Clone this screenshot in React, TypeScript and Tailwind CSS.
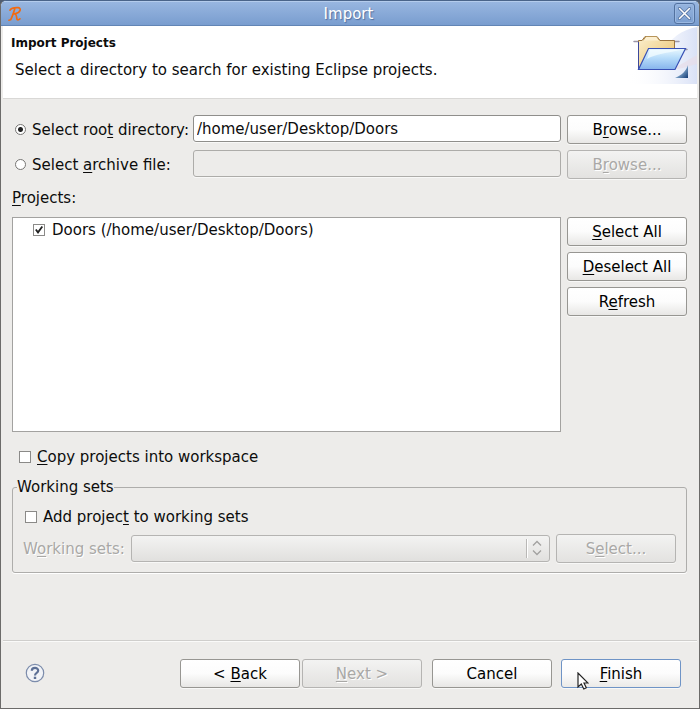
import { useState } from "react";
import type { ReactNode } from "react";

type ButtonProps = {
  children: ReactNode;
  disabled?: boolean;
  focused?: boolean;
};

function Key({ children }: { children: ReactNode }) {
  return <span className="underline decoration-1 underline-offset-2">{children}</span>;
}

function Button({ children, disabled = false, focused = false }: ButtonProps) {
  const tone = disabled
    ? "border-[#b5b4b2] bg-linear-to-b from-[#f3f3f2] to-[#e3e2e0] text-[#a9a8a6] [text-shadow:1px_1px_0_#fff]"
    : focused
      ? "border-[#6f94c6] bg-linear-to-b from-white via-[#fcfcfc] to-[#ebeae8] text-black"
      : "border-[#979692] bg-linear-to-b from-white via-[#fcfcfc] to-[#e8e7e5] text-black";
  return (
    <button
      type="button"
      disabled={disabled}
      className={`h-[29px] w-[120px] shrink-0 rounded-[3px] border leading-5 shadow-[0_1px_0_#f8f8f7] ${tone}`}
    >
      {children}
    </button>
  );
}

function Radio({ checked, onChange, id }: { checked: boolean; onChange: () => void; id: string }) {
  return (
    <input
      id={id}
      type="radio"
      name="source"
      checked={checked}
      onChange={onChange}
      className="size-[11px] shrink-0 appearance-none rounded-full border border-[#777674] bg-white checked:bg-[radial-gradient(circle,#222_0,#222_2px,#fff_3px)]"
    />
  );
}

function Check({ id, defaultChecked = false }: { id: string; defaultChecked?: boolean }) {
  const [checked, setChecked] = useState(defaultChecked);
  return (
    <span className="grid size-[12px] shrink-0">
      <input
        id={id}
        type="checkbox"
        checked={checked}
        onChange={() => setChecked(!checked)}
        className="col-start-1 row-start-1 size-[12px] appearance-none border border-[#8b8a88] bg-white"
      />
      {checked && (
        <svg viewBox="0 0 12 12" className="pointer-events-none col-start-1 row-start-1 size-[12px]" fill="none">
          <path d="M2.800 5.500 5 8.400 9.300 2.500" stroke="#222" strokeWidth="1.800" />
        </svg>
      )}
    </span>
  );
}

function Logo() {
  return (
    <svg viewBox="0 0 16 16" className="size-4" fill="none" stroke="#f26a10" strokeWidth="1.700" strokeLinecap="round" strokeLinejoin="round">
      <path d="M3 4.200C4 2.200 8 1.600 11 1.700 14.500 1.900 14 6.500 8.500 7.600L6.500 8M7.700 3C6.500 7 5.200 11 3.600 13.800L2 14.200M8 8C10 8.500 9.300 11.500 10 13.200 10.600 14.200 12.200 13.800 13 12.800" />
    </svg>
  );
}

function FolderBanner() {
  return (
    <svg viewBox="0 0 75 58" className="h-[58px] w-[75px]" fill="none">
      <defs>
        <linearGradient id="glow" x1="0" y1="0" x2="1" y2="0">
          <stop offset="0" stopColor="#fff" stopOpacity="0" />
          <stop offset="1" stopColor="#d9e1f6" />
        </linearGradient>
        <linearGradient id="paper" x1="0" y1="0" x2="1" y2="1">
          <stop offset="0" stopColor="#fbefcd" />
          <stop offset="1" stopColor="#e9bf68" />
        </linearGradient>
        <linearGradient id="front" x1="0" y1="0" x2="0" y2="1">
          <stop offset="0" stopColor="#e9f8ff" />
          <stop offset=".45" stopColor="#b7dcfa" />
          <stop offset="1" stopColor="#86b4ec" />
        </linearGradient>
        <linearGradient id="corner" x1="0" y1="0" x2="1" y2="1">
          <stop offset=".3" stopColor="#a9cde8" />
          <stop offset="1" stopColor="#123a75" />
        </linearGradient>
      </defs>
      <path d="M75 1C60 4 47 12 42 27L5 50V58H75Z" fill="url(#glow)" />
      <path d="M49 43C58 40 67 33 75 29V38C66 40 59 44 49 43Z" fill="#e7dde8" opacity=".7" />
      <path d="M12 15.500H57M22 23.500H65" stroke="#9b96a8" strokeWidth="1.500" strokeLinecap="round" />
      <path d="M16.500 14.500H20L23 10.500H35L38 14.500H52.500V43H16.500Z" fill="url(#paper)" stroke="#9a7541" />
      <path d="M21 14.500 24 10.500H34.500L37.500 14.500" fill="#fcefd0" stroke="#b79459" />
      <path d="M16.500 16V43" stroke="#3c489c" />
      <path d="M26.500 22.500H63.500L53 43.500H16.500Z" fill="url(#front)" stroke="#3850b5" strokeWidth="1.200" />
      <path d="M28 24H58C46 27 33 28 25 33Z" fill="#f3fcff" opacity=".75" />
      <path d="M66 39V52H53C60 49 64 45 66 39Z" fill="url(#corner)" />
    </svg>
  );
}

export default function App() {
  const [source, setSource] = useState("root");
  const [path, setPath] = useState("/home/user/Desktop/Doors");

  return (
    <div className="flex min-h-screen flex-col bg-[#505d70] font-['DejaVu_Sans',sans-serif] text-[15px] leading-5 text-[#0c0c0c]">
      <div className="flex min-h-screen flex-col overflow-hidden rounded-t-[6px] border border-[#6c6b6a] border-t-[#4a6489] bg-[#edecea]">
        <header className="flex h-[25px] shrink-0 items-center border-t border-b border-t-[#b4ccec] border-b-[#6285b5] bg-linear-to-b from-[#98b6e0] to-[#799dcf] pr-1 pl-[6px]">
          <Logo />
          <h1 className="flex-1 text-center text-white [text-shadow:1px_1px_1px_#506f9f]">Import</h1>
          <button
            type="button"
            aria-label="Close"
            className="grid size-[21px] place-items-center rounded-[3px] border border-[#52719f] shadow-[inset_0_0_0_1px_#9bb9e2]"
          >
            <svg viewBox="0 0 13 13" className="size-[13px]" fill="none" strokeLinecap="round">
              <path d="M1.500 1.500 11.500 11.500M11.500 1.500 1.500 11.500" stroke="#4c6b99" strokeWidth="3" />
              <path d="M1.500 1.500 11.500 11.500M11.500 1.500 1.500 11.500" stroke="#fff" strokeWidth="1.600" />
            </svg>
          </button>
        </header>

        <section className="mx-[2px] flex h-[73px] shrink-0 justify-between border-b border-[#d9d8d6] bg-white">
          <div className="pt-[7px] pl-2">
            <h2 className="text-xs leading-5 font-bold">Import Projects</h2>
            <p className="pt-[7px] pl-1">Select a directory to search for existing Eclipse projects.</p>
          </div>
          <FolderBanner />
        </section>

        <main className="flex flex-1 flex-col pt-4 pr-3 pl-[11px]">
          <div className="grid grid-cols-[auto_1fr_auto] gap-x-1 gap-y-[6px]">
            <div className="flex h-[29px] items-center gap-[6px] pl-[3px]">
              <Radio id="root" checked={source === "root"} onChange={() => setSource("root")} />
              <label htmlFor="root">Select roo<Key>t</Key> directory:</label>
            </div>
            <input
              aria-label="Root directory"
              value={path}
              onChange={(e) => setPath(e.target.value)}
              className="mr-[2px] h-[27px] min-w-0 rounded-[3px] border border-[#8f8e8b] bg-white px-[3px] shadow-[0_1px_0_#f8f8f7]"
            />
            <Button>B<Key>r</Key>owse...</Button>
            <div className="flex h-[29px] items-center gap-[6px] pl-[3px]">
              <Radio id="archive" checked={source === "archive"} onChange={() => setSource("archive")} />
              <label htmlFor="archive">Select <Key>a</Key>rchive file:</label>
            </div>
            <input
              aria-label="Archive file"
              disabled
              className="mr-[2px] h-[27px] min-w-0 rounded-[3px] border border-[#adaca9] bg-[#edecea] px-[3px] shadow-[0_1px_0_#f8f8f7]"
            />
            <Button disabled>B<Key>r</Key>owse...</Button>
          </div>

          <h3 className="pt-[9px]"><Key>P</Key>rojects:</h3>
          <div className="flex gap-[6px] pt-[9px]">
            <ul className="h-[215px] flex-1 border border-[#a3a2a0] bg-white pt-[2px] pl-5">
              <li className="flex items-center gap-[7px]">
                <Check id="doors" defaultChecked />
                <label htmlFor="doors">Doors (/home/user/Desktop/Doors)</label>
              </li>
            </ul>
            <div className="flex flex-col gap-[6px]">
              <Button><Key>S</Key>elect All</Button>
              <Button><Key>D</Key>eselect All</Button>
              <Button>R<Key>e</Key>fresh</Button>
            </div>
          </div>

          <div className="flex items-center gap-[6px] pt-[15px] pl-[7px]">
            <Check id="copy" />
            <label htmlFor="copy"><Key>C</Key>opy projects into workspace</label>
          </div>

          <fieldset className="mt-[10px] min-w-0 rounded-[3px] border border-[#aeadab] pr-[10px] pb-[9px] pl-[10px] shadow-[0_1px_0_#fff]">
            <legend className="-ml-[6px]">Working sets</legend>
            <div className="flex items-center gap-[6px] pt-[10px] pl-[2px]">
              <Check id="add" />
              <label htmlFor="add">Add projec<Key>t</Key> to working sets</label>
            </div>
            <div className="flex items-center gap-[6px] pt-[7px]">
              <label htmlFor="sets" className="text-[#a9a8a6] [text-shadow:1px_1px_0_#fff]">
                W<Key>o</Key>rking sets:
              </label>
              <div className="grid min-w-0 flex-1">
                <select
                  id="sets"
                  disabled
                  className="col-start-1 row-start-1 h-[27px] w-full appearance-none rounded-[3px] border border-[#b5b4b2] bg-linear-to-b from-[#f3f3f2] to-[#e1e0de] shadow-[0_1px_0_#f8f8f7]"
                />
                <svg
                  viewBox="0 0 24 27"
                  className="pointer-events-none col-start-1 row-start-1 h-[27px] w-6 justify-self-end"
                  fill="none"
                >
                  <path d="M.5 4V23" stroke="#b9b8b6" />
                  <path d="M1.500 4V23" stroke="#fff" />
                  <path d="M7 10.500 11 6.500 15 10.500M7 15.500 11 19.500 15 15.500" stroke="#a2a19f" strokeWidth="1.300" />
                </svg>
              </div>
              <Button disabled>S<Key>e</Key>lect...</Button>
            </div>
          </fieldset>
        </main>

        <footer className="mx-[2px] flex h-[68px] shrink-0 items-start border-t border-[#cfcecc] pt-[18px] pr-4 pl-[22px] shadow-[inset_0_1px_0_#fafaf9]">
          <button type="button" aria-label="Help" className="mt-1 size-5">
            <svg viewBox="0 0 20 20" className="size-5">
              <circle cx="10" cy="10" r="8.700" fill="#f1f3f7" stroke="#7c8cab" strokeWidth="1.200" />
              <path d="M6.800 7.800C6.800 4 13.200 4 13.200 7.500 13.200 10 10 9.600 10 12.400" fill="none" stroke="#5d7096" strokeWidth="2.200" />
              <rect x="8.800" y="13.700" width="2.400" height="2.300" fill="#5d7096" />
            </svg>
          </button>
          <div className="ml-auto flex gap-[2px]">
            <Button>&lt; <Key>B</Key>ack</Button>
            <Button disabled><Key>N</Key>ext &gt;</Button>
          </div>
          <div className="ml-[10px] flex gap-[9px]">
            <Button>Cancel</Button>
            <div className="relative">
              <Button focused><Key>F</Key>inish</Button>
              <svg viewBox="0 0 12 18" className="pointer-events-none absolute top-[13px] left-4 h-[18px] w-3">
                <path d="M1 1V15L4.300 12 6.800 17 9.300 15.800 7 11H11Z" fill="#fff" stroke="#222" strokeWidth="1.200" />
              </svg>
            </div>
          </div>
        </footer>
      </div>
    </div>
  );
}
